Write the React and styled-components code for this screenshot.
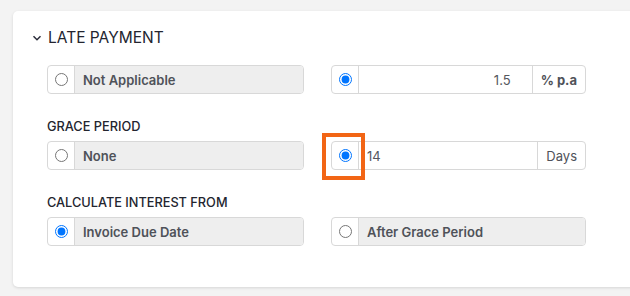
import styled, { createGlobalStyle } from "styled-components";

const GlobalStyle = createGlobalStyle`
    html, body {
        margin: 0;
        padding: 0;
        background: #f3f3f3;
        overflow: hidden;
        font-family: Inter, "Liberation Sans", sans-serif;
    }
`;

const App = () => {
    return (
        <>
            <GlobalStyle />
            <Page>
                <Card>
                    <Header>
                        <Chevron viewBox="0 0 10 10">
                            <path d="M1.5 3.2 L5 6.7 L8.5 3.2" />
                        </Chevron>
                        <Title>LATE PAYMENT</Title>
                    </Header>
                    <Body>
                        <Row>
                            <Group>
                                <Addon>
                                    <Radio type="radio" name="late" readOnly />
                                </Addon>
                                <Option>Not Applicable</Option>
                            </Group>
                            <Group>
                                <Addon>
                                    <Radio type="radio" name="late" defaultChecked />
                                </Addon>
                                <Field $align="right" defaultValue="1.5" />
                                <Suffix $bold>% p.a</Suffix>
                            </Group>
                        </Row>

                        <Label>GRACE PERIOD</Label>
                        <Row>
                            <Group>
                                <Addon>
                                    <Radio type="radio" name="grace" readOnly />
                                </Addon>
                                <Option>None</Option>
                            </Group>
                            <Group>
                                <Addon>
                                    <Radio type="radio" name="grace" defaultChecked />
                                    <Highlight />
                                </Addon>
                                <Field defaultValue="14" />
                                <Suffix>Days</Suffix>
                            </Group>
                        </Row>

                        <Label>CALCULATE INTEREST FROM</Label>
                        <Row>
                            <Group>
                                <Addon>
                                    <Radio type="radio" name="from" defaultChecked />
                                </Addon>
                                <Option>Invoice Due Date</Option>
                            </Group>
                            <Group>
                                <Addon>
                                    <Radio type="radio" name="from" readOnly />
                                </Addon>
                                <Option>After Grace Period</Option>
                            </Group>
                        </Row>
                    </Body>
                </Card>
            </Page>
        </>
    );
};
export default App;

const Page = styled.div`
    width: 100vw;
    height: 100vh;
    overflow: hidden;
    padding: 11px 0 0 13px;
    box-sizing: border-box;
`

const Card = styled.div`
    width: calc(100% + 12px);
    box-sizing: border-box;
    background: #fff;
    border-radius: 5px;
    box-shadow: 0 1px 3px rgba(0, 0, 0, 0.12);
    padding: 17px 19px 41px;
`

const Header = styled.div`
    display: flex;
    align-items: center;
    gap: 6px;
    height: 19px;
`

const Chevron = styled.svg`
    width: 10px;
    height: 10px;
    fill: none;
    stroke: #2b2d3a;
    stroke-width: 1.5;
`

const Title = styled.span`
    font-size: 15.5px;
    font-weight: 400;
    color: #23252f;
`

const Body = styled.div`
    padding-left: 15px;
    padding-top: 18px;
    width: 539px;
`

const Row = styled.div`
    display: grid;
    grid-template-columns: 257px 255px;
    column-gap: 27px;
`

const Label = styled.div`
    font-size: 12.75px;
    line-height: 16px;
    font-weight: 500;
    color: #23252f;
    margin: 25px 0 6px;
`

const Group = styled.div`
    display: flex;
    height: 29px;
    box-sizing: border-box;
    border: 1px solid #d8d8d8;
    border-radius: 4px;
    background: #fff;
`

const Addon = styled.div`
    position: relative;
    flex: 0 0 26px;
    display: flex;
    align-items: center;
    justify-content: center;
    border-right: 1px solid #d8d8d8;
`

const Radio = styled.input`
    margin: 0;
    width: 13px;
    height: 13px;
`

const Highlight = styled.div`
    position: absolute;
    left: -10px;
    top: -9px;
    width: 43px;
    height: 47px;
    box-sizing: border-box;
    border: 4px solid #f26515;
    pointer-events: none;
`

const Option = styled.div`
    flex: 1;
    display: flex;
    align-items: center;
    padding-left: 8px;
    background: #eeeeee;
    border-radius: 0 3px 3px 0;
    font-size: 13px;
    font-weight: 600;
    color: #4f5259;
`

const Field = styled.input`
    flex: 1;
    min-width: 0;
    border: none;
    outline: none;
    background: transparent;
    font-family: inherit;
    font-size: 13px;
    color: #55575e;
    text-align: ${(p) => p.$align || "left"};
    padding: 0 ${(p) => (p.$align === "right" ? "21px" : "8px")};
`

const Suffix = styled.div`
    display: flex;
    align-items: center;
    padding: 0 8px;
    border-left: 1px solid #d8d8d8;
    font-size: 13px;
    font-weight: ${(p) => (p.$bold ? 700 : 400)};
    color: #4f5259;
`
